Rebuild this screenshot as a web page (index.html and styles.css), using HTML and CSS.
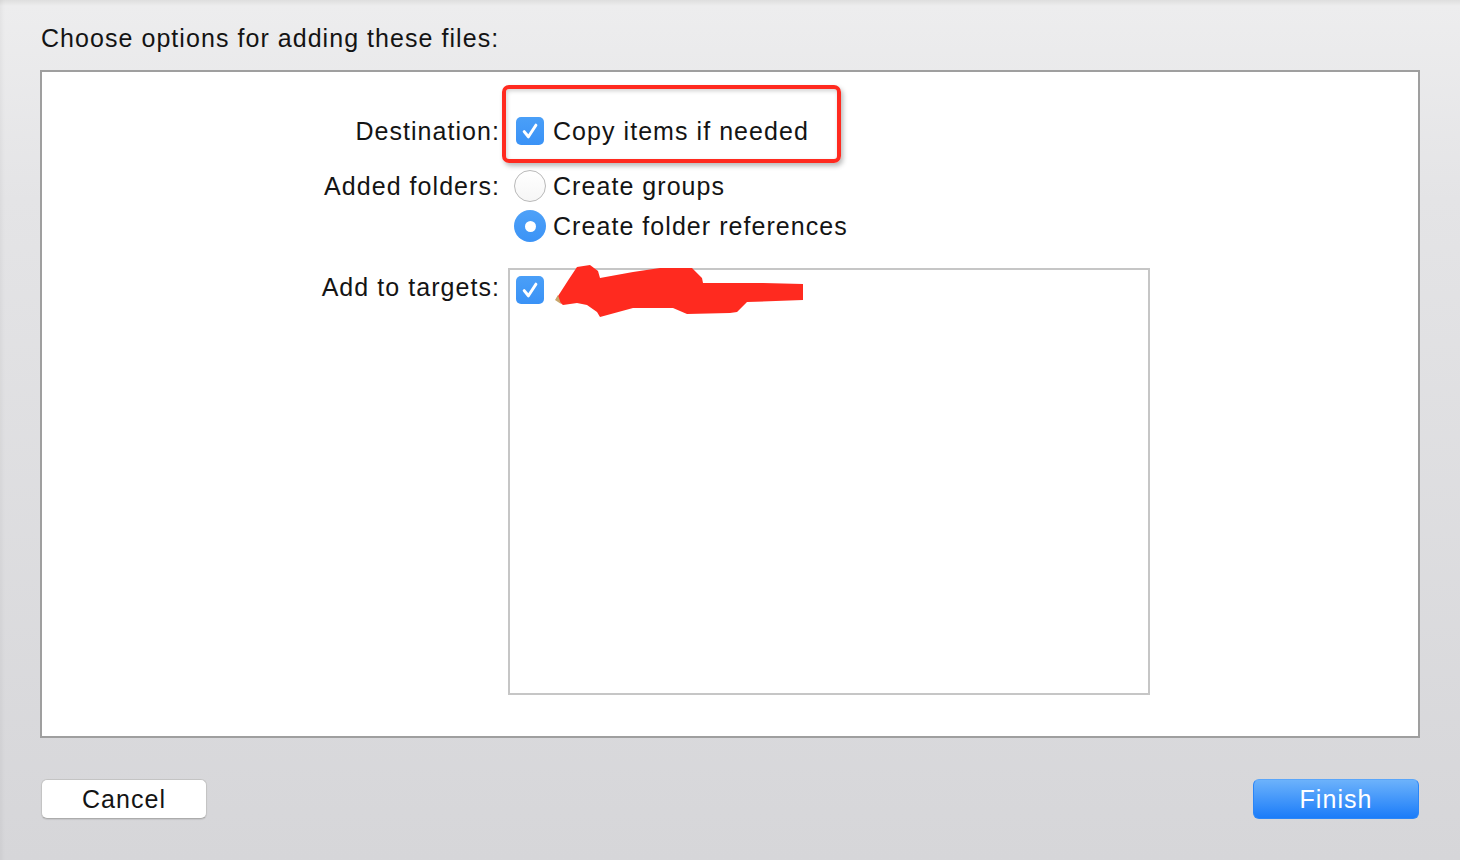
FILE: index.html
```html
<!DOCTYPE html>
<html lang="en">
<head>
<meta charset="utf-8">
<title>Choose options for adding these files</title>
<link rel="stylesheet" href="styles.css">
</head>
<body>
<div class="sheet">
  <h1 class="title">Choose options for adding these files:</h1>
  <div class="panel">
    <div class="row row-dest">
      <div class="label">Destination:</div>
      <div class="field dest">
        <div class="opt">
          <span class="ctl"><span class="checkbox"><svg viewBox="0 0 28 28" width="28" height="28"><path d="M8.2 14.6 L12.4 19.8 L19.9 8.2" fill="none" stroke="#fff" stroke-width="3" stroke-linecap="round" stroke-linejoin="round"/></svg></span></span>
          <span class="opt-text">Copy items if needed</span>
        </div>
        <span class="highlight"></span>
      </div>
    </div>
    <div class="row row-groups">
      <div class="label">Added folders:</div>
      <div class="field">
        <div class="opt">
          <span class="ctl"><span class="radio"></span></span>
          <span class="opt-text">Create groups</span>
        </div>
      </div>
    </div>
    <div class="row">
      <div class="label"></div>
      <div class="field">
        <div class="opt">
          <span class="ctl"><span class="radio on"><span class="dot"></span></span></span>
          <span class="opt-text">Create folder references</span>
        </div>
      </div>
    </div>
    <div class="row row-targets">
      <div class="label label-targets">Add to targets:</div>
      <div class="field">
        <div class="targets">
          <div class="target-item">
            <span class="checkbox"><svg viewBox="0 0 28 28" width="28" height="28"><path d="M8.2 14.6 L12.4 19.8 L19.9 8.2" fill="none" stroke="#fff" stroke-width="3" stroke-linecap="round" stroke-linejoin="round"/></svg></span>
          </div>
          <svg class="scribble" viewBox="0 0 250 55" width="250" height="55"><path d="M1 34 L5 28 L14 14 L22 2 L35 0 L43 6 L45 13 L78 7 L105 3 L137 3 L147 13 L148 18 L208 18 L248 19 L248 35 L192 37 L182 47 L175 48 L132 49 L118 43 L78 43 L45 52 L42 47 L32 40 L22 38 L8 40 Z" fill="#ff2a1f"/><path d="M0 35 L3 30 L6 39 Z" fill="#c9a66b"/></svg>
        </div>
      </div>
    </div>
  </div>
  <div class="footer">
    <button class="btn btn-cancel">Cancel</button>
    <button class="btn btn-finish">Finish</button>
  </div>
</div>
</body>
</html>
```
FILE: styles.css
```css
html, body {
  margin: 0;
  padding: 0;
}
body {
  width: 1460px;
  height: 860px;
  overflow: hidden;
  font-family: "Liberation Sans", Arial, sans-serif;
  font-size: 25px;
  letter-spacing: 1.05px;
  color: #141414;
  background: linear-gradient(to bottom, #dedede 0px, #ededee 6px, #e4e4e6 200px, #d6d6d9 860px);
}
.sheet {
  height: 860px;
  box-sizing: border-box;
  padding: 18px 40px 0 40px;
  box-shadow: inset 5px 0 5px -4px rgba(0,0,0,0.06);
}
.title {
  margin: 0 0 12px 1px;
  font-size: 25px;
  font-weight: normal;
  line-height: 40px;
}
.panel {
  height: 668px;
  box-sizing: border-box;
  background: #fff;
  border: 2px solid #9f9f9f;
  padding-top: 39px;
}
.row {
  display: flex;
  column-gap: 14px;
}
.row-groups {
  margin-top: 15px;
}
.row-targets {
  margin-top: 22px;
}
.label {
  width: 458px;
  flex: none;
  text-align: right;
  line-height: 40px;
  height: 40px;
}
.label-targets {
  line-height: 38px;
}
.field {
  position: relative;
}
.opt {
  display: flex;
  align-items: center;
  height: 40px;
}
.ctl {
  width: 32px;
  height: 32px;
  display: flex;
  align-items: center;
  justify-content: center;
  margin-right: 7px;
  flex: none;
}
.opt-text {
  line-height: 40px;
  white-space: nowrap;
}
.checkbox {
  width: 28px;
  height: 28px;
  border-radius: 5px;
  background: linear-gradient(to bottom, #4a9ff8, #3a92f6);
  display: block;
  flex: none;
}
.checkbox svg {
  display: block;
}
.radio {
  width: 32px;
  height: 32px;
  box-sizing: border-box;
  border-radius: 50%;
  background: linear-gradient(to bottom, #ffffff, #f6f6f6);
  border: 1.5px solid #b9b9b9;
  display: flex;
  align-items: center;
  justify-content: center;
}
.radio.on {
  border: none;
  background: linear-gradient(to bottom, #4ea1f8, #3b93f6);
}
.radio .dot {
  width: 11px;
  height: 11px;
  border-radius: 50%;
  background: #fff;
}
.highlight {
  position: absolute;
  left: -12px;
  top: -26px;
  width: 339px;
  height: 78px;
  box-sizing: border-box;
  border: 4px solid #ff2a1f;
  border-radius: 7px;
  box-shadow: 2px 3px 5px rgba(0,0,0,0.28), inset 1px 2px 4px rgba(0,0,0,0.18);
  pointer-events: none;
}
.targets {
  position: relative;
  margin-left: -6px;
  width: 642px;
  height: 427px;
  box-sizing: border-box;
  border: 2px solid #c6c6c6;
  padding: 6px;
}
.target-item {
  display: flex;
  align-items: center;
  height: 28px;
}
.scribble {
  position: absolute;
  left: 45px;
  top: -5px;
}
.footer {
  display: flex;
  justify-content: space-between;
  margin-top: 41px;
  padding: 0 1px;
}
.btn {
  width: 166px;
  height: 40px;
  box-sizing: border-box;
  border-radius: 6px;
  font-family: "Liberation Sans", Arial, sans-serif;
  font-size: 25px;
  letter-spacing: 1.05px;
  padding: 0;
  line-height: 38px;
}
.btn-cancel {
  background: #fff;
  color: #141414;
  border: 1px solid #c4c4c4;
  border-bottom-color: #acacac;
  box-shadow: 0 1px 1px rgba(0,0,0,0.08);
}
.btn-finish {
  background: linear-gradient(to bottom, #6cb2fb, #1b7cf9);
  color: #fff;
  border: 1px solid #2b86f7;
  border-top-color: #5aa6fa;
}
```
